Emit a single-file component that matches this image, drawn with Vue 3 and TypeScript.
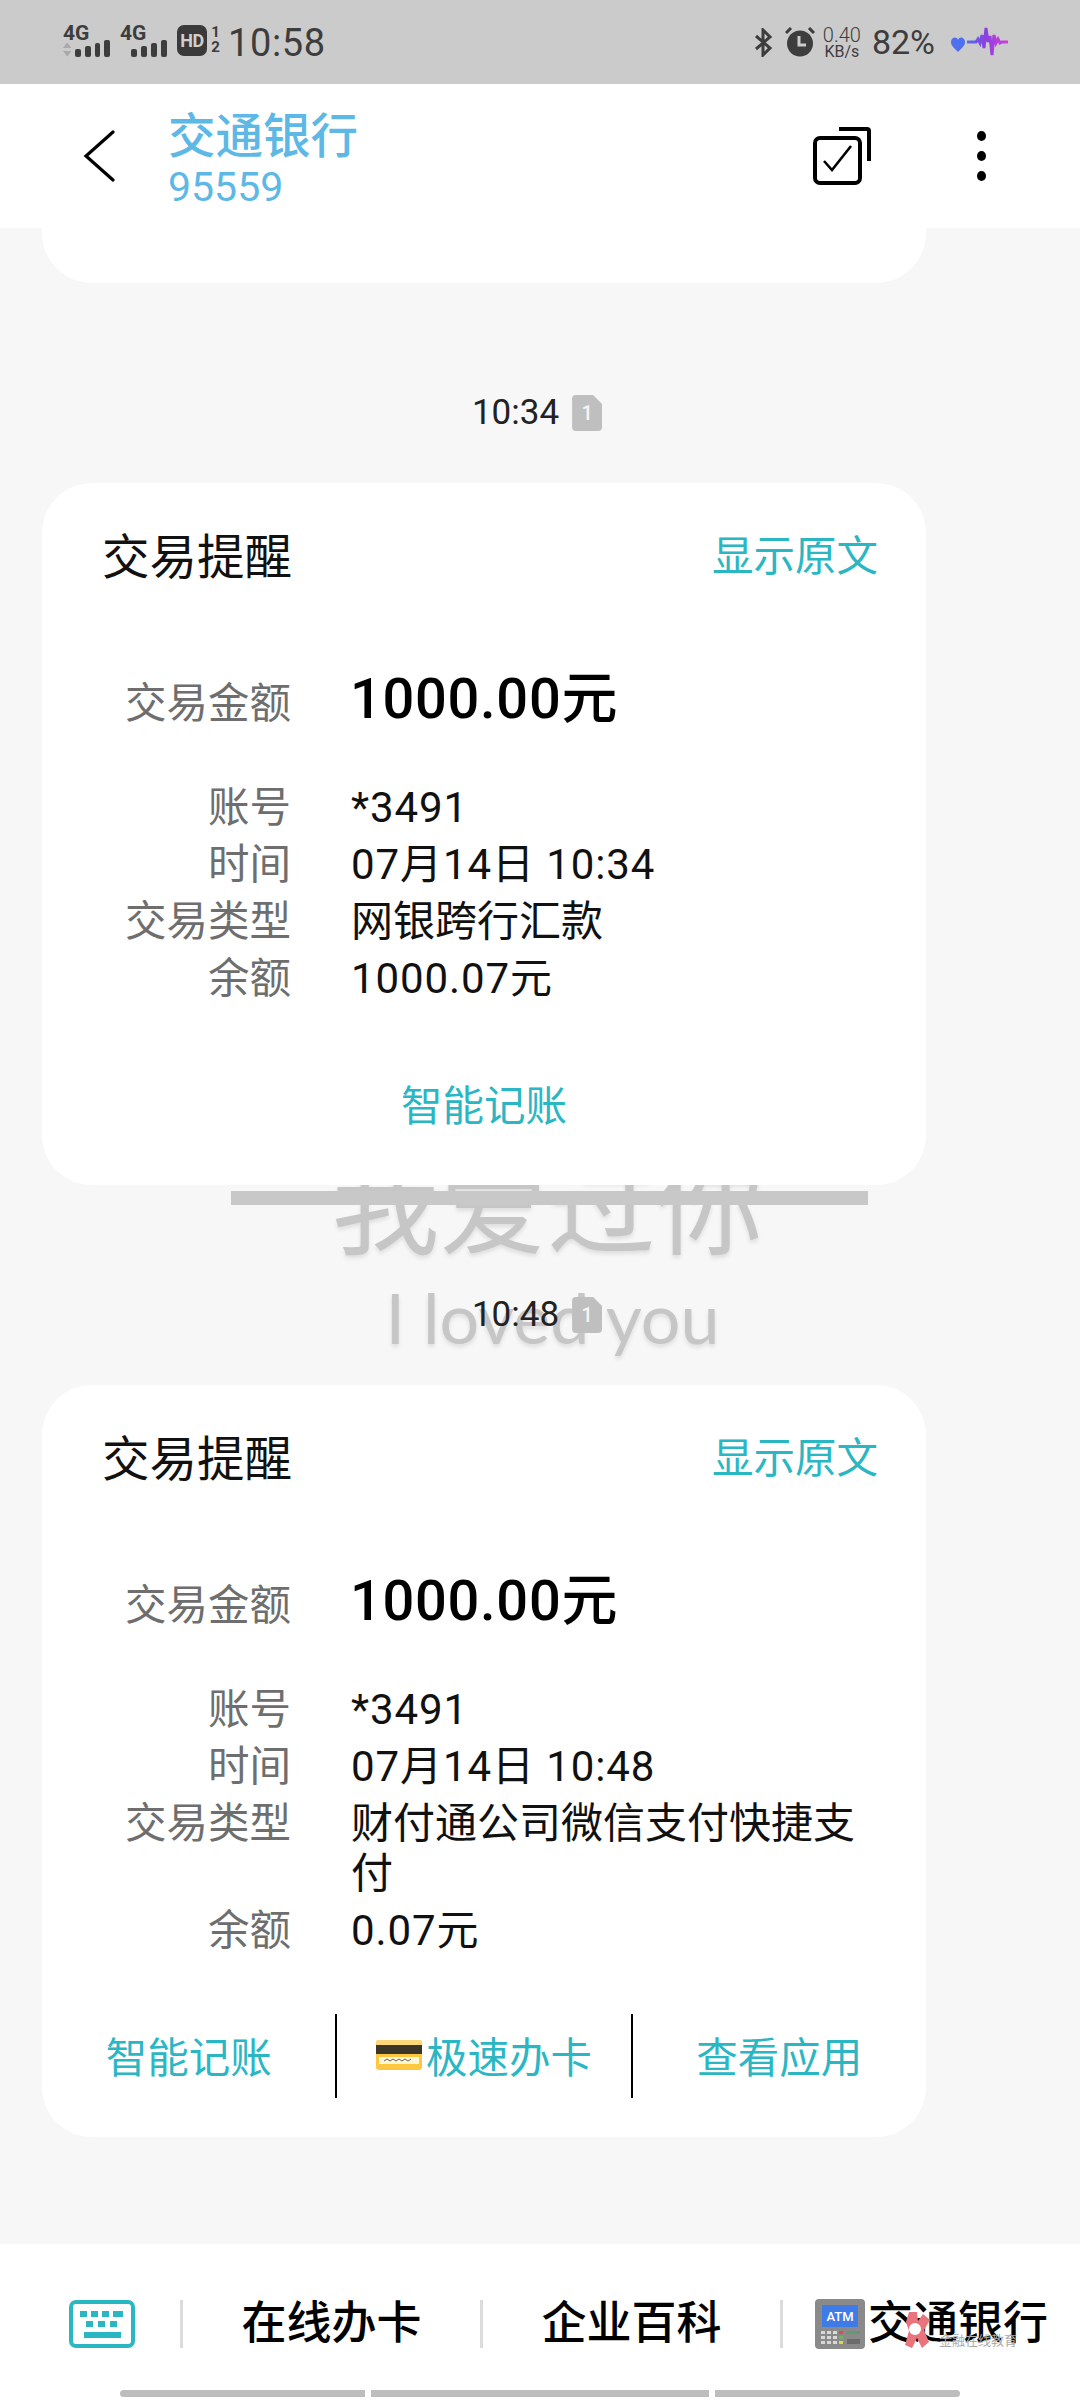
<script setup lang="ts">
interface Row { label: string; value: string }
interface Action { text: string; card?: boolean }
interface Msg { time: string; rows: Row[]; actions: Action[] }
const msgs: Msg[] = [
  {
    time: '10:34',
    rows: [
      { label: '账号', value: '*3491' },
      { label: '时间', value: '07月14日 10:34' },
      { label: '交易类型', value: '网银跨行汇款' },
      { label: '余额', value: '1000.07元' },
    ],
    actions: [{ text: '智能记账' }],
  },
  {
    time: '10:48',
    rows: [
      { label: '账号', value: '*3491' },
      { label: '时间', value: '07月14日 10:48' },
      { label: '交易类型', value: '财付通公司微信支付快捷支付' },
      { label: '余额', value: '0.07元' },
    ],
    actions: [{ text: '智能记账' }, { text: '极速办卡', card: true }, { text: '查看应用' }],
  },
]
const barsA = [8, 11, 14, 17]
const hasDigits = (s: string): boolean => /\d/.test(s)
</script>

<template>
  <div class="screen">
    <div class="status">
      <div class="st-left">
        <div class="net">
          <span class="g4">4G</span>
          <div class="net-low">
            <svg class="updown" width="9" height="15" viewBox="0 0 9 15"><path d="M4.5 0 9 6H0z" fill="#a9a9a9" /><path d="M4.5 15 9 9H0z" fill="#a9a9a9" /></svg>
            <span v-for="h in barsA" :key="h" class="bar" :style="{ height: h + 'px' }"></span>
          </div>
        </div>
        <div class="net net2">
          <span class="g4">4G</span>
          <div class="net-low">
            <span v-for="h in barsA" :key="h" class="bar" :style="{ height: h + 'px' }"></span>
          </div>
        </div>
        <span class="hd">HD</span>
        <div class="sim"><span>1</span><span>2</span></div>
        <span class="clock">10:58</span>
      </div>
      <div class="st-right">
        <svg width="19" height="29" viewBox="0 0 19 29" fill="none" stroke="#3d3d3d" stroke-width="3"><path d="M2 8 16 20 9 27V2l7 7L2 21" /></svg>
        <svg class="alarm" width="30" height="30" viewBox="0 0 30 30">
          <circle cx="15" cy="16.5" r="13" fill="#3d3d3d" />
          <path d="M14 9v9h7" fill="none" stroke="#cbcbcb" stroke-width="3" />
          <path d="M1 6 6 1M29 6 24 1" stroke="#3d3d3d" stroke-width="3" />
        </svg>
        <div class="speed"><span class="s1">0.40</span><span class="s2">KB/s</span></div>
        <span class="batt">82%</span>
        <svg width="64" height="32" viewBox="0 0 64 32" class="wave">
          <defs>
            <linearGradient id="wv" x1="0" x2="1" y1="0" y2="0">
              <stop offset="0" stop-color="#4e6ff0" />
              <stop offset="0.45" stop-color="#8d3fe0" />
              <stop offset="1" stop-color="#d53fd8" />
            </linearGradient>
          </defs>
          <path d="M8 26C3 21 1 19 1 16c0-5 6-6 7-2 1-4 7-3 7 2 0 3-2 5-7 10z" fill="#4e6ff0" />
          <path d="M17 16h9l2-3 2 4 2-8 2 13 2-20 2 14 2-6 2 19 2-20 2 8 2-4 2 4 2-1h6" fill="none" stroke="url(#wv)" stroke-width="3" />
        </svg>
      </div>
    </div>

    <header class="topbar">
      <svg class="back" width="32" height="52" viewBox="0 0 32 52" fill="none" stroke="#000" stroke-width="3.2" stroke-linecap="round"><path d="M30 2 3 26l27 24" /></svg>
      <div class="who">
        <div class="who-name">交通银行</div>
        <div class="who-num">95559</div>
      </div>
      <svg class="sel" width="58" height="58" viewBox="0 0 58 58" fill="none" stroke="#000">
        <path d="M26 2h28a2 2 0 0 1 2 2v30" stroke-width="4" />
        <rect x="2" y="11" width="45" height="45" rx="5" stroke-width="4" />
        <path d="M11 34l8 9 19-24" stroke-width="2.6" />
      </svg>
      <div class="dots"><i></i><i></i><i></i></div>
    </header>

    <main class="thread">
      <div class="wall">
        <div class="wall-cn">我爱过你</div>
        <div class="wall-line"></div>
        <div class="wall-en">I loved you</div>
      </div>
      <div class="stub"></div>
      <template v-for="m in msgs" :key="m.time">
        <div class="timerow">
          <span class="time">{{ m.time }}</span>
          <span class="simtag">1</span>
        </div>
        <article class="card">
          <div class="head">
            <span class="head-t">交易提醒</span>
            <span class="link">显示原文</span>
          </div>
          <div class="amount">
            <span class="lab">交易金额</span>
            <span class="amt">1000.00元</span>
          </div>
          <div class="rows">
            <div v-for="r in m.rows" :key="r.label" class="row">
              <span class="lab">{{ r.label }}</span>
              <span class="val" :class="{ num: hasDigits(r.value) }">{{ r.value }}</span>
            </div>
          </div>
          <div class="acts">
            <div v-for="a in m.actions" :key="a.text" class="act">
              <svg v-if="a.card" class="cc" width="46" height="30" viewBox="0 0 46 30">
                <rect width="46" height="30" rx="3" fill="#fdc83f" />
                <rect width="46" height="5" rx="2" fill="#fbd878" />
                <rect y="5" width="46" height="9" fill="#3b3628" />
                <rect x="3" y="17" width="40" height="7" fill="#fff6d8" />
                <path d="M8 21l3-2 3 2 3-2 3 2 3-2 3 2 3-2 3 2 3-2" fill="none" stroke="#6b6452" stroke-width="1" />
              </svg>
              <span>{{ a.text }}</span>
            </div>
          </div>
        </article>
      </template>
    </main>

    <footer class="bottom">
      <div class="chips">
        <svg class="kbd" width="66" height="48" viewBox="0 0 66 48">
          <rect x="2" y="2" width="62" height="44" rx="5" fill="#fff" stroke="#2bb6c4" stroke-width="4" />
          <g fill="#2bb6c4">
            <rect x="11" y="11" width="7" height="6" /><rect x="22" y="11" width="7" height="6" /><rect x="33" y="11" width="7" height="6" /><rect x="44" y="11" width="10" height="6" />
            <rect x="17" y="21" width="7" height="6" /><rect x="29" y="21" width="7" height="6" /><rect x="41" y="21" width="7" height="6" />
            <rect x="15" y="32" width="37" height="6" />
          </g>
        </svg>
        <span class="sep first"></span>
        <span class="chip">在线办卡</span>
        <span class="sep"></span>
        <span class="chip">企业百科</span>
        <span class="sep"></span>
        <svg class="atm" width="50" height="50" viewBox="0 0 50 50">
          <rect width="50" height="50" rx="4" fill="#8a8a8a" />
          <rect x="7" y="6" width="36" height="22" rx="1" fill="#3f7be6" />
          <text x="25" y="22" text-anchor="middle" font-family="Roboto, sans-serif" font-size="13" font-weight="500" fill="#fff">ATM</text>
          <g fill="#d8d8d8">
            <rect x="6" y="32" width="4" height="3" /><rect x="12" y="32" width="4" height="3" /><rect x="18" y="32" width="4" height="3" />
            <rect x="6" y="37" width="4" height="3" /><rect x="12" y="37" width="4" height="3" /><rect x="18" y="37" width="4" height="3" />
            <rect x="6" y="42" width="4" height="3" /><rect x="12" y="42" width="4" height="3" /><rect x="18" y="42" width="4" height="3" />
          </g>
          <rect x="24" y="32" width="4" height="3" fill="#d8504a" />
          <rect x="24" y="37" width="4" height="3" fill="#6db36a" />
          <rect x="24" y="42" width="4" height="3" fill="#e8d24a" />
          <rect x="32" y="32" width="13" height="3" fill="#5f9a70" />
          <rect x="32" y="40" width="13" height="5" fill="#6c6c6c" />
        </svg>
        <span class="chip chip-atm">交通银行</span>
      </div>
      <div class="scroll">
        <span class="sb s-a"></span><span class="sb s-b"></span><span class="sb s-c"></span>
      </div>
      <div class="stamp">
        <svg width="26" height="36" viewBox="0 0 26 36">
          <path d="M4 0h8l1 9 5-7 7 6-6 10 5 12-7 6-5-10-5 10-7-3 4-14L1 10z" fill="#e9747c" />
          <circle cx="10" cy="17" r="6" fill="#fff" />
        </svg>
        <span class="stamp-t">金融在线教育</span>
      </div>
    </footer>
  </div>
</template>

<style>
html, body { margin: 0; padding: 0; }
</style>

<style scoped>
.screen {
  position: relative;
  width: 1080px;
  height: 2400px;
  display: flex;
  flex-direction: column;
  overflow: hidden;
  background: #f7f7f7;
  font-family: Roboto, "Noto Sans CJK SC", sans-serif;
  color: #111;
}
.status {
  height: 84px;
  flex: none;
  background: #cbcbcb;
  display: flex;
  justify-content: space-between;
  align-items: flex-start;
  padding: 0 66px 0 63px;
  box-sizing: border-box;
  color: #3d3d3d;
}
.st-left { display: flex; align-items: flex-start; padding-top: 25px; }
.net { width: 47px; display: flex; flex-direction: column; }
.net2 { margin-left: 10px; width: 47px; }
.g4 { font-size: 21px; font-weight: 700; line-height: 16px; }
.net-low { display: flex; align-items: flex-end; gap: 4px; height: 16px; justify-content: flex-end; }
.updown { align-self: flex-end; }
.bar { width: 6px; background: #3d3d3d; border-radius: 2px; }
.hd {
  margin-left: 10px;
  width: 30px;
  height: 31px;
  background: #3a3a3a;
  color: #cfcfcf;
  border-radius: 7px;
  font-size: 18px;
  font-weight: 700;
  line-height: 31px;
  text-align: center;
  letter-spacing: -0.5px;
}
.sim { width: 13px; margin-left: 2px; display: flex; flex-direction: column; font-size: 15px; font-weight: 700; line-height: 15px; align-items: center; }
.clock { font-size: 38px; line-height: 36px; margin-left: 6px; letter-spacing: 0.6px; }
.st-right { display: flex; align-items: center; height: 84px; }
.alarm { margin-left: 12px; }
.speed { display: flex; flex-direction: column; align-items: center; width: 40px; margin-left: 7px; line-height: 1; }
.s1 { font-size: 20px; line-height: 19px; font-weight: 300; }
.s2 { font-size: 16px; line-height: 14px; }
.batt { font-size: 34px; margin-left: 10px; }
.wave { margin-left: 15px; }
.topbar {
  height: 144px;
  flex: none;
  background: #fff;
  display: flex;
  align-items: center;
  padding-left: 83px;
  box-sizing: border-box;
  position: relative;
  z-index: 2;
}
.back { flex: none; }
.who { margin-left: 53px; padding-top: 3px; }
.who-name { font-size: 47.5px; line-height: 56px; color: #5db8e6; font-weight: 500; }
.who-num { font-size: 41px; line-height: 40px; margin-top: 2px; color: #5db8e6; }
.sel { margin-left: auto; }
.dots { margin-left: 106px; margin-right: 94px; display: flex; flex-direction: column; gap: 10px; }
.dots i { display: block; width: 9px; height: 10px; border-radius: 50%; background: #000; }
.thread { position: relative; flex: 1; min-height: 0; }
.wall { position: absolute; left: 0; right: 0; top: 0; height: 0; }
.wall-cn {
  position: absolute;
  top: 916px;
  left: 0;
  width: 1095px;
  text-align: center;
  font-size: 108px;
  line-height: 130px;
  color: #c6c6c6;
  text-shadow: 0 3px 4px rgba(0, 0, 0, 0.1);
}
.wall-line {
  position: absolute;
  left: 231px;
  width: 637px;
  top: 963px;
  height: 14px;
  background: #c8c8c8;
}
.wall-en {
  position: absolute;
  top: 1039px;
  left: 0;
  width: 1105px;
  text-align: center;
  font-family: Lato, sans-serif;
  font-weight: 400;
  font-size: 70px;
  line-height: 100px;
  color: #c6c6c6;
  text-shadow: 0 3px 4px rgba(0, 0, 0, 0.1);
}
.stub {
  position: relative;
  margin: 0 154px 0 42px;
  height: 55px;
  background: #fff;
  border-radius: 0 0 50px 50px;
}
.timerow {
  position: relative;
  height: 36px;
  margin: 112px 0 52px;
  padding-right: 6px;
  display: flex;
  align-items: center;
  justify-content: center;
}
.time { font-size: 35px; color: #222; line-height: 36px; }
.simtag {
  margin-left: 13px;
  width: 30px;
  height: 36px;
  background: #bfbfbf;
  color: #f5f5f5;
  font-size: 20px;
  font-weight: 500;
  line-height: 36px;
  text-align: center;
  border-radius: 4px 0 4px 4px;
  clip-path: polygon(0 0, 70% 0, 100% 25%, 100% 100%, 0 100%);
}
.card {
  position: relative;
  margin: 0 154px 0 42px;
  background: #fff;
  border-radius: 50px;
  padding: 40px 0 39px;
}
.head {
  display: flex;
  justify-content: space-between;
  align-items: center;
  padding: 0 48px 0 60px;
  height: 60px;
}
.head-t { font-size: 47.5px; color: #111; }
.link { font-size: 41.5px; color: #2bb6c4; }
.amount, .row {
  display: grid;
  grid-template-columns: 189px 1fr;
  column-gap: 60px;
  padding: 0 47px 0 60px;
  align-items: baseline;
}
.amount { margin-top: 81px; height: 70px; }
.lab { font-size: 41.5px; color: #6e6e6e; text-align: right; line-height: 51px; }
.amt { font-size: 56px; font-weight: 500; line-height: 70px; color: #000; letter-spacing: 0.7px; margin-left: -1px; }
.rows { margin-top: 48px; display: flex; flex-direction: column; gap: 6px; }
.row { min-height: 51px; }
.val { font-size: 42px; line-height: 50px; color: #111; }
.val.num { letter-spacing: 0.9px; }
.acts { margin-top: 58px; display: flex; justify-content: center; height: 84px; }
.act {
  flex: 1;
  display: flex;
  align-items: center;
  justify-content: center;
  gap: 4px;
  font-size: 41.5px;
  color: #2bb6c4;
  padding-bottom: 2px;
}
.act + .act { border-left: 2px solid #000; }
.cc { flex: none; }
.bottom {
  position: relative;
  height: 156px;
  flex: none;
  background: #fff;
}
.chips {
  display: flex;
  align-items: center;
  height: 50px;
  padding: 55px 0 0 69px;
}
.kbd { flex: none; }
.sep { width: 3px; height: 48px; background: #dcdcdc; flex: none; }
.sep.first { margin-left: 45px; }
.chip { width: 297px; text-align: center; font-size: 45px; font-weight: 500; color: #000; flex: none; line-height: 50px; }
.atm { margin-left: 32px; flex: none; }
.chip.chip-atm { width: auto; margin-left: 3px; }
.scroll { position: absolute; left: 120px; top: 146px; display: flex; gap: 6px; }
.sb { height: 7px; background: #bdbdbd; display: block; }
.s-a { width: 245px; border-radius: 4px 0 0 4px; }
.s-b { width: 338px; }
.s-c { width: 245px; border-radius: 0 4px 4px 0; }
.stamp { position: absolute; left: 905px; top: 68px; display: flex; align-items: flex-end; gap: 8px; }
.stamp-t { font-size: 13px; line-height: 14px; color: #aaa; }
</style>
